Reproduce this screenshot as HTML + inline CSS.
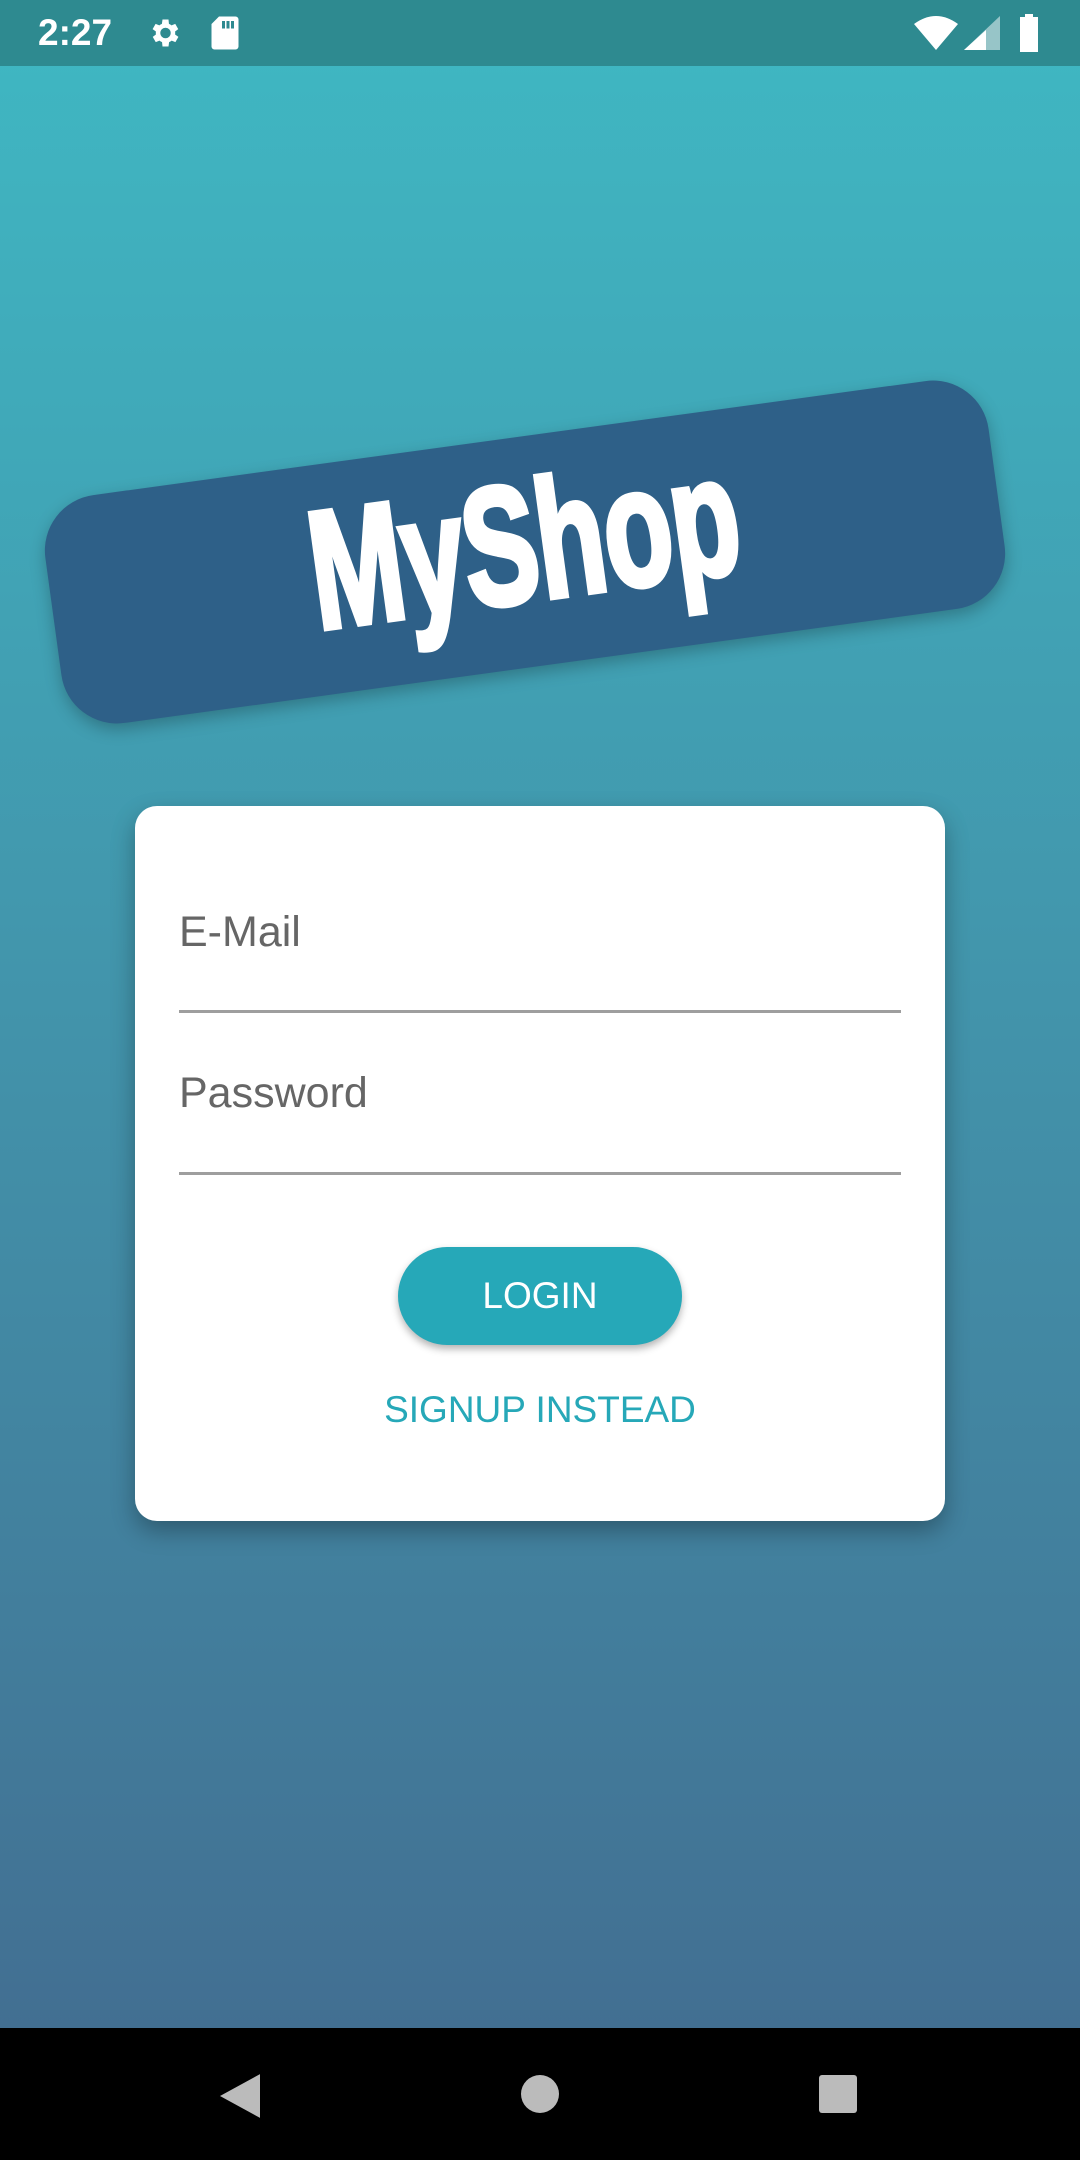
<!DOCTYPE html>
<html><head><meta charset="utf-8"><style>
html,body{margin:0;padding:0;width:1080px;height:2160px;overflow:hidden}
body{position:relative;font-family:"Liberation Sans",sans-serif;background:linear-gradient(#3fb8c3 0px,#4294ab 1000px,#426f92 2028px)}
.sb{position:absolute;left:0;top:0;width:1080px;height:66px;background:#2e8a90}
.time{position:absolute;left:38px;top:12px;color:#fff;font-size:37px;font-weight:bold}
.nav{position:absolute;left:0;top:2028px;width:1080px;height:132px;background:#000}
.banner{position:absolute;left:49px;top:437px;width:952px;height:230px;background:#2e6088;border-radius:56px;transform:rotate(-7.8deg);box-shadow:0 6px 16px rgba(0,0,0,.25)}
.logo{position:absolute;left:0;width:100%;top:26px;text-align:center;color:#fff;font-family:"Liberation Sans Narrow","Liberation Sans",sans-serif;font-weight:bold;font-size:140px;line-height:160px;transform:scale(0.8,1.2);letter-spacing:-1px;-webkit-text-stroke:5px #fff}
.card{position:absolute;left:135px;top:806px;width:810px;height:715px;background:#fff;border-radius:22px;box-shadow:0 10px 24px rgba(0,0,0,.3)}
.lbl{position:absolute;left:44px;color:#666;font-size:43px}
.line{position:absolute;left:44px;width:722px;height:3px;background:#9e9e9e}
.btn{position:absolute;left:263px;top:441px;width:284px;height:98px;border-radius:49px;background:#26a8b8;color:#fff;font-size:37px;text-align:center;line-height:98px;box-shadow:0 4px 8px rgba(0,0,0,.3)}
.sig{position:absolute;left:0;width:100%;top:583px;text-align:center;color:#26a8b8;font-size:37px}
</style></head><body>
<div class="sb">
<div class="time">2:27</div>
<svg style="position:absolute;left:146px;top:15px" width="36" height="36" viewBox="0 0 24 24"><path fill="#fff" d="M19.4 13a7.5 7.5 0 000-2l2.1-1.6-2-3.5-2.5 1a7 7 0 00-1.7-1L15 3h-4l-.4 2.9a7 7 0 00-1.7 1l-2.5-1-2 3.5L6.6 11a7.5 7.5 0 000 2l-2.1 1.6 2 3.5 2.5-1a7 7 0 001.7 1L11 21h4l.4-2.9a7 7 0 001.7-1l2.5 1 2-3.5zM13 15.5a3.5 3.5 0 110-7 3.5 3.5 0 010 7z"/></svg>
<svg style="position:absolute;left:210px;top:15px" width="30" height="36" viewBox="0 0 20 24"><path fill="#fff" d="M6 1h11a2 2 0 012 2v18a2 2 0 01-2 2H3a2 2 0 01-2-2V6zM8 4v5h2V4zm3 0v5h2V4zm3 0v5h2V4z"/></svg>
<svg style="position:absolute;left:914px;top:16px" width="44" height="34" viewBox="0 0 44 34"><path fill="#fff" d="M0 8Q22-8 44 8L22 34z"/></svg>
<svg style="position:absolute;left:964px;top:16px" width="36" height="34" viewBox="0 0 36 34"><path fill="#fff" opacity=".5" d="M36 0V34H0z"/><path fill="#fff" d="M22 14V34H0z"/></svg>
<svg style="position:absolute;left:1018px;top:14px" width="22" height="38" viewBox="0 0 22 38"><path fill="#fff" d="M7 0h8v3h5v35H2V3h5z"/></svg>
</div>
<div class="banner"><div class="logo">MyShop</div></div>
<div class="card">
<div class="lbl" style="top:102px">E-Mail</div>
<div class="line" style="top:204px"></div>
<div class="lbl" style="top:263px">Password</div>
<div class="line" style="top:366px"></div>
<div class="btn">LOGIN</div>
<div class="sig">SIGNUP INSTEAD</div>
</div>
<div class="nav">
<svg style="position:absolute;left:220px;top:46px" width="40" height="44" viewBox="0 0 42 46"><path fill="#bbb" d="M42 0V46L0 23z"/></svg>
<div style="position:absolute;left:521px;top:47px;width:38px;height:38px;border-radius:50%;background:#bbb"></div>
<div style="position:absolute;left:819px;top:47px;width:38px;height:38px;border-radius:3px;background:#bbb"></div>
</div>
</body></html>
